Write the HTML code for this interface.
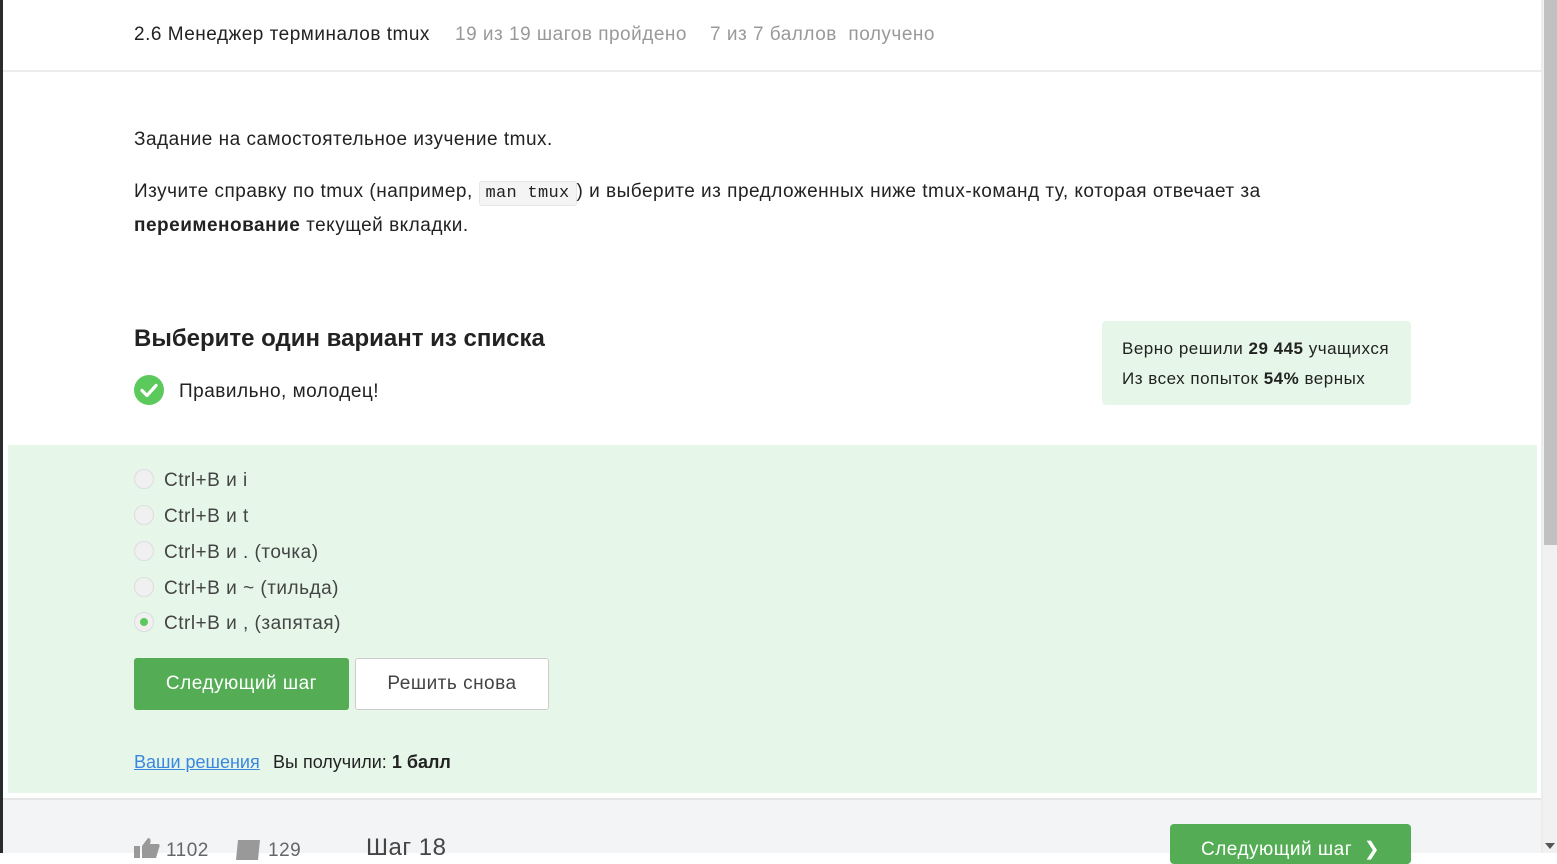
<!DOCTYPE html>
<html><head><meta charset="utf-8"><style>
*{margin:0;padding:0;box-sizing:border-box}
body{width:1557px;height:853px;overflow:hidden;background:#fff;font-family:"Liberation Sans","Noto Sans CJK SC",sans-serif;color:#222;position:relative;letter-spacing:0.5px}
.lb{position:absolute;left:0;top:0;width:3px;height:853px;background:#2b2b2b}
.sb{position:absolute;left:1543px;top:0;width:14px;height:853px;background:#f1f1f1}
.th{position:absolute;left:1544px;top:0;width:13px;height:545px;background:#c1c1c1}
.sbl{position:absolute;left:1541px;top:0;width:2px;height:853px;background:#ececec}
.hdr{position:absolute;left:3px;top:0;width:1538px;height:72px;border-bottom:2px solid #ececec}
.hdr span{position:absolute;top:24px;font-size:19px;color:#999}
.t{position:absolute;font-size:19px;color:#222}
code{font-family:"Liberation Mono",monospace;background:#f4f4f4;border:1px solid #e6e6e6;border-radius:3px;padding:2px 6px;font-size:17px;letter-spacing:0.3px}
.stat{position:absolute;left:1102px;top:321px;width:309px;height:84px;background:#e6f7e9;border-radius:4px;font-size:17px;line-height:30px;padding:13px 20px}
.green{position:absolute;left:8px;top:445px;width:1529px;height:348px;background:#e6f7e9}
.r{position:absolute;left:134px;width:20px;height:20px;border-radius:50%;background:#f0f0f0;border:1px solid #ddd}
.rl{position:absolute;left:164px;font-size:19px;color:#444}
.b1{position:absolute;left:134px;top:658px;width:215px;height:52px;background:#54ad54;border-radius:3px;color:#fff;font-size:19px;text-align:center;line-height:52px}
.b2{position:absolute;left:355px;top:658px;width:194px;height:52px;background:#fff;border:1px solid #ccc;border-radius:3px;color:#444;font-size:19px;text-align:center;line-height:50px}
.foot{position:absolute;left:3px;top:798px;width:1538px;height:55px;background:#f3f4f6;border-top:2px solid #e6e6e6}
</style></head><body>
<div class="lb"></div>
<div class="hdr">
<span style="left:131px;color:#222">2.6 Менеджер терминалов tmux</span>
<span style="left:452px">19 из 19 шагов пройдено</span>
<span style="left:707px">7 из 7 баллов&nbsp; получено</span>
</div>
<div class="t" style="left:134px;top:129px">Задание на самостоятельное изучение tmux.</div>
<div class="t" style="left:134px;top:176px;line-height:32px;width:1250px">Изучите справку по tmux (например, <code>man tmux</code>) и выберите из предложенных ниже tmux-команд ту, которая отвечает за <b>переименование</b> текущей вкладки.</div>
<div class="t" style="left:134px;top:325px;font-size:24px;font-weight:bold;color:#222;letter-spacing:0">Выберите один вариант из списка</div>
<svg style="position:absolute;left:134px;top:375px" width="30" height="30" viewBox="0 0 30 30"><circle cx="15" cy="15" r="15" fill="#5cc95c"/><path d="M8 15.5l5 5 9-10" stroke="#fff" stroke-width="3.2" fill="none" stroke-linecap="round" stroke-linejoin="round"/></svg>
<div class="t" style="left:179px;top:381px">Правильно, молодец!</div>
<div class="stat">Верно решили <b>29 445</b> учащихся<br>Из всех попыток <b>54%</b> верных</div>
<div class="green"></div>
<div class="r" style="top:469px"></div><div class="rl" style="top:470px">Ctrl+B и i</div>
<div class="r" style="top:505px"></div><div class="rl" style="top:506px">Ctrl+B и t</div>
<div class="r" style="top:541px"></div><div class="rl" style="top:542px">Ctrl+B и . (точка)</div>
<div class="r" style="top:577px"></div><div class="rl" style="top:578px">Ctrl+B и ~ (тильда)</div>
<div class="r" style="top:612px"><div style="position:absolute;left:5px;top:5px;width:8px;height:8px;border-radius:50%;background:#5cc95c"></div></div><div class="rl" style="top:613px">Ctrl+B и , (запятая)</div>
<div class="b1">Следующий шаг</div>
<div class="b2">Решить снова</div>
<div class="t" style="left:134px;top:752px;font-size:18px;color:#3a86e0;text-decoration:underline;letter-spacing:0">Ваши решения</div>
<div class="t" style="left:273px;top:752px;font-size:18px;letter-spacing:0">Вы получили: <b>1 балл</b></div>
<div class="foot">
<svg style="position:absolute;left:131px;top:38px" width="26" height="20" viewBox="0 0 26 20"><path d="M0 8h6v12H0zM8 8l6-8c3 0 3 3 2 6h8c2 0 2 2 1 4l-3 10H8z" fill="#999"/></svg>
<span style="position:absolute;left:163px;top:40px;font-size:19px;color:#666">1102</span>
<svg style="position:absolute;left:233px;top:40px" width="26" height="20" viewBox="0 0 26 20"><path d="M2 0h22l-2 20H0z" fill="#999"/></svg>
<span style="position:absolute;left:265px;top:40px;font-size:19px;color:#666">129</span>
<span style="position:absolute;left:363px;top:34px;font-size:24px;color:#444">Шаг 18</span>
<div style="position:absolute;left:1167px;top:24px;width:241px;height:40px;background:#54ad54;border-radius:4px;color:#fff;font-size:19px;padding:14px 0 0 31px">Следующий шаг &nbsp;❯</div>
</div>
<div class="sbl"></div>
<div class="sb"></div><div class="th"></div>
<div style="position:absolute;left:1545px;top:843px;width:0;height:0;border-left:5px solid transparent;border-right:5px solid transparent;border-top:6px solid #555"></div>
</body></html>
